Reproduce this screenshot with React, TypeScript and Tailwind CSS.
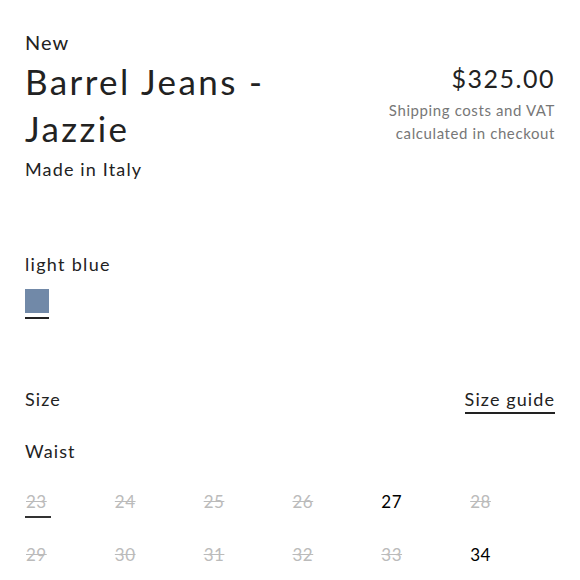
import React from 'react'

const WAIST = [
  { size: '23', available: false, selected: true },
  { size: '24', available: false },
  { size: '25', available: false },
  { size: '26', available: false },
  { size: '27', available: true },
  { size: '28', available: false },
  { size: '29', available: false },
  { size: '30', available: false },
  { size: '31', available: false },
  { size: '32', available: false },
  { size: '33', available: false },
  { size: '34', available: true },
]

export default function App() {
  return (
    <div
      className="w-[580px] h-[580px] overflow-hidden bg-white px-[25px] text-[#222]"
      style={{ fontFamily: 'Lato, "Noto Sans", sans-serif' }}
    >
      {/* Header */}
      <div className="flex justify-between pt-[28px]">
        <div>
          <p className="text-[20px] leading-[28px] tracking-[1px]">New</p>
          <h1 className="text-[35px] leading-[47px] tracking-[2.4px] mt-[2px] w-[290px]">Barrel Jeans - Jazzie</h1>
          <p className="text-[18px] leading-[26px] tracking-[1.15px] mt-[4px]">Made in Italy</p>
        </div>
        <div className="text-right pt-[34px]">
          <p className="text-[25px] leading-[32px] tracking-[1.5px]">$325.00</p>
          <p className="text-[15px] leading-[23px] tracking-[0.6px] text-[#777] mt-[5px]">
            Shipping costs and VAT
            <br />
            calculated in checkout
          </p>
        </div>
      </div>

      {/* Colour */}
      <p className="text-[18px] leading-[26px] tracking-[1.3px] mt-[69px]">light blue</p>
      <div className="mt-[12px] w-[24px]">
        <div className="w-[24px] h-[24px] bg-[#7189a8]" />
        <div className="h-[2px] bg-[#222] mt-[4px]" />
      </div>

      {/* Size */}
      <div className="flex justify-between items-start mt-[67px]">
        <p className="text-[18px] leading-[26px] tracking-[1.1px]">Size</p>
        <p className="text-[18px] leading-[26px] tracking-[1.1px] border-b-2 border-[#222]">Size guide</p>
      </div>
      <p className="text-[18px] leading-[26px] tracking-[1.1px] mt-[24px]">Waist</p>

      <div className="grid grid-cols-6 gap-y-[25px] mt-[26px] w-[534px] pl-[1px]">
        {WAIST.map((w) => (
          <div key={w.size}>
            <span
              className={
                w.available
                  ? 'inline-block text-[17px] leading-[24px] tracking-[0.5px] text-black'
                  : 'inline-block text-[17px] leading-[24px] tracking-[0.5px] text-[#bbb] line-through'
              }
            >
              {w.size}
            </span>
            {w.selected && <div className="w-[26px] h-[2px] bg-[#333] mt-[2px] -ml-[1px]" />}
          </div>
        ))}
      </div>
    </div>
  )
}
